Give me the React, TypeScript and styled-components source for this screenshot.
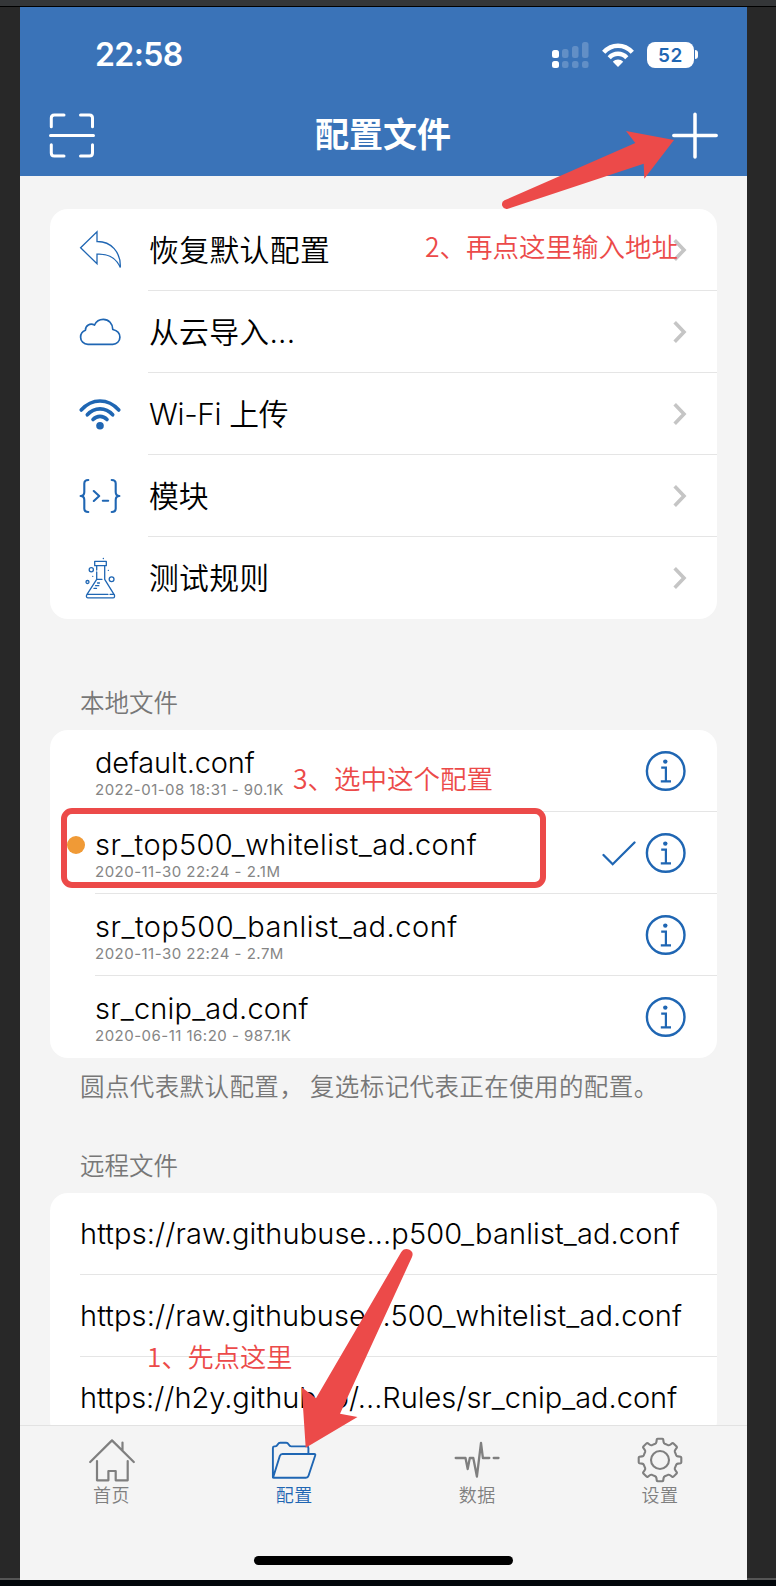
import React from "react";
import styled, { createGlobalStyle } from "styled-components";

const latin = `Inter, "Noto Sans CJK SC", sans-serif`;
const cjk = `"Noto Sans CJK SC", sans-serif`;
const red = "#ec4a49";
const blue = "#1f66b3";

const GlobalStyle = createGlobalStyle`
  *, *::before, *::after { box-sizing: border-box; }
  body { margin: 0; background: #282828; font-family: ${latin}; }
  svg { display: block; flex: none; }
`;

const Desk = styled.div`
  position: relative;
  width: 776px;
  height: 1586px;
  overflow: hidden;
  display: flex;
  flex-direction: column;
  background: #282828;
`;
const WindowEdge = styled.div`
  flex: none;
  height: 7px;
  background: #343638;
  border-bottom: 1px solid #000;
`;
const Stage = styled.div`
  flex: none;
  height: 1573px;
  padding: 0 29px 0 20px;
  background: linear-gradient(#282828 1571px, #555 1571px);
`;
const Dock = styled.div`
  flex: 1;
  background: #02060b;
`;
const Phone = styled.main`
  height: 100%;
  display: flex;
  flex-direction: column;
  background: #f4f4f4;
`;

const Header = styled.header`
  flex: none;
  height: 169px;
  background: #3a73b8;
  color: #fff;
`;
const StatusBar = styled.div`
  height: 84px;
  padding: 10px 49px 0 75px;
  display: flex;
  align-items: center;
  justify-content: space-between;
`;
const Clock = styled.time`
  padding-top: 2px;
  font-size: 32px;
  line-height: 40px;
  font-weight: 600;
  letter-spacing: -0.6px;
`;
const Signals = styled.div`
  display: flex;
  align-items: center;
  gap: 13px;
  margin-top: 1px;
`;
const Battery = styled.div`
  display: flex;
  align-items: center;
  gap: 1px;
`;
const BatteryBody = styled.span`
  width: 47px;
  height: 26px;
  border-radius: 8px;
  background: #fff;
  color: ${blue};
  font-size: 19px;
  line-height: 27px;
  font-weight: 600;
  letter-spacing: 0.5px;
  text-align: center;
`;
const BatteryNub = styled.span`
  width: 3px;
  height: 9px;
  border-radius: 0 4px 4px 0;
  background: #fff;
`;
const NavBar = styled.div`
  height: 85px;
  padding: 2px 29px 0 28px;
  display: flex;
  align-items: center;
  justify-content: space-between;
`;
const Title = styled.h1`
  margin: 0;
  font: 600 34px/48px ${cjk};
  padding-bottom: 4px;
`;

const Content = styled.div`
  flex: none;
  height: 1249px;
  overflow: hidden;
  padding: 33px 30px 0;
`;
const Card = styled.section`
  border-radius: 18px;
  background: #fff;
`;
const Row = styled.div<{ $inset: number }>`
  position: relative;
  height: 82px;
  display: flex;
  align-items: center;
  padding: 0 30px 0 ${(p) => p.$inset}px;
  &:not(:last-child)::after {
    content: "";
    position: absolute;
    left: ${(p) => p.$inset}px;
    right: 0;
    bottom: 0;
    height: 1px;
    background: #e5e5e5;
  }
`;
const MenuRow = styled(Row)`
  padding-left: 28px;
  gap: 27px;
`;
const MenuLabel = styled.span<{ $spacing: number }>`
  flex: 1;
  font: 350 29.8px/44px ${latin};
  color: #000;
  letter-spacing: ${(p) => p.$spacing}px;
`;
const SectionLabel = styled.h2<{ $height: number }>`
  margin: 0;
  height: ${(p) => p.$height}px;
  padding: 0 30px 10px;
  display: flex;
  align-items: flex-end;
  font: 350 24.5px/36px ${cjk};
  color: #777;
`;
const Note = styled.p`
  margin: 0;
  padding: 10px 0 0 30px;
  height: 47px;
  font: 350 24.5px/36px ${cjk};
  letter-spacing: 0.4px;
  color: #777;
  white-space: pre;
`;
const FileText = styled.div`
  flex: 1;
  padding-top: 5px;
`;
const FileName = styled.div<{ $spacing: number }>`
  font-size: 29px;
  font-weight: 360;
  line-height: 32px;
  letter-spacing: ${(p) => p.$spacing}px;
  color: #000;
`;
const FileMeta = styled.div`
  font-size: 15px;
  line-height: 21px;
  letter-spacing: 0.48px;
  color: #858585;
`;
const Url = styled.span<{ $spacing: number }>`
  font-size: 29px;
  font-weight: 360;
  line-height: 40px;
  letter-spacing: ${(p) => p.$spacing}px;
  white-space: nowrap;
  color: #000;
`;
const CheckSlot = styled.span`
  margin-right: 9px;
`;
const DefaultDot = styled.span`
  position: absolute;
  left: 17px;
  top: 24px;
  width: 18px;
  height: 18px;
  border-radius: 50%;
  background: #f09a36;
`;

const TabBar = styled.nav`
  flex: 1;
  border-top: 1px solid #e2e2e2;
  padding: 11px 27px 15px 31.5px;
  display: flex;
  flex-direction: column;
  justify-content: space-between;
`;
const Tabs = styled.div`
  display: flex;
  justify-content: space-between;
`;
const Tab = styled.div<{ $active?: boolean }>`
  width: 120px;
  display: flex;
  flex-direction: column;
  align-items: center;
  color: ${(p) => (p.$active ? blue : "#7f7f7f")};
`;
const TabLabel = styled.span`
  font: 350 18px/24px ${cjk};
  letter-spacing: 0.5px;
  margin-top: -1px;
`;
const HomeIndicator = styled.div`
  width: 259px;
  height: 9px;
  margin-left: 202.5px;
  border-radius: 5px;
  background: #000;
`;

const Arrows = styled.svg`
  position: absolute;
  left: 0;
  top: 0;
  pointer-events: none;
`;
const Callout = styled.span<{ $x: number; $y: number; $size?: number }>`
  position: absolute;
  left: ${(p) => p.$x}px;
  top: ${(p) => p.$y}px;
  font: 350 ${(p) => p.$size ?? 26.5}px/36px ${cjk};
  color: ${red};
  white-space: nowrap;
`;
const Highlight = styled.div`
  position: absolute;
  left: 61px;
  top: 808px;
  width: 485px;
  height: 80px;
  border: 6px solid ${red};
  border-radius: 11px;
`;

type LineIconProps = { size: number; width?: number; children: React.ReactNode };
const LineIcon = ({ size, width = 1.4, children }: LineIconProps) => (
  <svg width={size} height={size} viewBox={`0 0 ${size} ${size}`} fill="none" stroke="currentColor" strokeWidth={width} strokeLinecap="round" strokeLinejoin="round">
    {children}
  </svg>
);
const MenuIcon = styled.span`
  color: ${blue};
`;

const RestoreIcon = () => (
  <LineIcon size={44} width={1.3}>
    <path strokeLinejoin="miter" d="M2.6 19.7 19 3.8V13.5C33 13.3 43 24 42.3 39.5C38.5 30.5 30 25.6 19 26.2V35.8Z" />
  </LineIcon>
);
const CloudIcon = () => (
  <LineIcon size={44} width={1.7}>
    <path d="M10 34.3C5.6 34.3 2.6 31 2.6 27.2C2.6 23.8 4.5 21.4 7.4 20.3C7.5 15.5 12 12.7 16.5 15C18.2 11.4 21.4 9.4 25.3 9.4C30.8 9.4 34.7 13.7 34.8 19.5C39 20.4 41.9 23.5 41.9 27.3C41.9 31.2 38.7 34.3 34.8 34.3Z" />
  </LineIcon>
);
const WifiIcon = () => (
  <LineIcon size={44} width={3.6}>
    <path d="M3.2 18C14 6 30 6 40.8 18M9.3 22.8C16.5 14.9 27.5 14.9 34.7 22.8M15 27.5C19 23.3 25 23.3 29 27.5" />
    <circle cx="22" cy="33.7" r="3.8" fill="currentColor" stroke="none" />
  </LineIcon>
);
const ModuleIcon = () => (
  <LineIcon size={44} width={2.1}>
    <path d="M10.3 6C7 6 6.3 7.5 6.3 9.5V18C6.3 20.5 5 22 2.6 22C5 22 6.3 23.5 6.3 26V34.5C6.3 36.5 7 38 10.3 38M33.7 6C37 6 37.7 7.5 37.7 9.5V18C37.7 20.5 39 22 41.4 22C39 22 37.7 23.5 37.7 26V34.5C37.7 36.5 37 38 33.7 38M15.8 17 21.2 22 15.8 27M24.8 26.7H30.2" />
  </LineIcon>
);
const FlaskIcon = () => (
  <LineIcon size={44} width={1.3}>
    <path d="M16.7 5.3H28.3V9.7H16.7ZM18.7 9.7V14M18.7 16V23.3L9 38.3M26.7 9.7V23.3L36 38.3M18.7 23.3H24M9 38.3H30M32 38.3H36.2C37 40.5 36.5 41.9 35 41.9H9.8C8.2 41.9 8 40 9 38.3M19.5 27H21.5M17.6 29.7H20.8M16 32.4H18.5" />
    <circle cx="13.3" cy="13.7" r="2.1" />
    <circle cx="33.6" cy="23.3" r="2.4" />
    <circle cx="9.5" cy="26" r="1.5" />
    <path d="M30.3 14.3h.1M14.7 20.3h.1M25.3 2.5h.1" />
  </LineIcon>
);
const Chevron = () => (
  <svg width="16" height="26" viewBox="0 0 16 26" fill="none" stroke="#c5c5c5" strokeWidth="3.6">
    <path d="M3.7 3.3 13 13 3.7 22.7" />
  </svg>
);
const InfoIcon = () => (
  <svg width="42" height="42" viewBox="0 0 42 42" fill="none" stroke={blue} strokeWidth="2.4">
    <circle cx="20.7" cy="21" r="18.8" />
    <circle cx="20.3" cy="11.6" r="2.2" fill={blue} stroke="none" />
    <path strokeWidth="2.2" d="M16.2 17.6H20.9V31M15.8 31.3H26" />
  </svg>
);
const CheckIcon = () => (
  <svg width="34" height="26" viewBox="0 0 34 26" fill="none" stroke={blue} strokeWidth="2.3" strokeLinecap="round">
    <path d="M1.5 15 10.7 24.2 32.5 2.5" />
  </svg>
);

const gearPath = (() => {
  const points: string[] = [];
  for (let i = 0; i < 8; i++) {
    const a = (i * Math.PI) / 4;
    const at = (x: number, y: number) =>
      `${(23 + x * Math.cos(a) - y * Math.sin(a)).toFixed(2)} ${(23 + x * Math.sin(a) + y * Math.cos(a)).toFixed(2)}`;
    points.push(
      `${i ? "L" : "M"}${at(-4.8, -16.2)}Q${at(-3.8, -16.7)} ${at(-3.6, -18)}L${at(-3.2, -20.6)}Q${at(-3, -21.3)} ${at(-2.2, -21.3)}` +
      `L${at(2.2, -21.3)}Q${at(3, -21.3)} ${at(3.2, -20.6)}L${at(3.6, -18)}Q${at(3.8, -16.7)} ${at(4.8, -16.2)}`
    );
  }
  return points.join("") + "Z";
})();

const HomeIcon = () => (
  <LineIcon size={46} width={2.2}>
    <path d="M1.2 25 23 3.4 44.8 25M33.5 5.5V13.5M8 24V43.3H19.4V34H26.7V43.3H38.7V24" />
  </LineIcon>
);
const FolderIcon = () => (
  <LineIcon size={46} width={1.9}>
    <path d="M1.9 40.5V10.9Q1.9 9.4 3.4 9.4H4.2C7.2 9.4 6.2 5.7 9.2 5.7H15.2C18.2 5.7 17.2 9.4 20.2 9.4H35.9Q37.4 9.4 37.4 10.9V16.7M2.1 40.5 8.8 19Q9.5 17 11.5 17H43.2Q44.7 17 44.2 18.5L37.5 38.7Q36.9 40.7 34.9 40.7H2.7Q1.9 40.7 2.1 40.5" />
  </LineIcon>
);
const PulseIcon = () => (
  <LineIcon size={46} width={2.3}>
    <path d="M1.7 21H11.5L13.7 32L15.8 21H19.3L22.9 39.5 27 6 28.9 21H35.3M39.7 21H44.5" />
  </LineIcon>
);
const GearIcon = () => (
  <LineIcon size={46} width={2.1}>
    <path d={gearPath} />
    <circle cx="23" cy="23" r="9" />
  </LineIcon>
);

const menu = [
  { label: "恢复默认配置", Icon: RestoreIcon, spacing: 0.4 },
  { label: "从云导入...", Icon: CloudIcon, spacing: 0.3 },
  { label: "Wi-Fi 上传", Icon: WifiIcon, spacing: -0.3 },
  { label: "模块", Icon: ModuleIcon, spacing: 0 },
  { label: "测试规则", Icon: FlaskIcon, spacing: 0.3 },
];
const files = [
  { name: "default.conf", meta: "2022-01-08 18:31 - 90.1K", spacing: -0.16 },
  { name: "sr_top500_whitelist_ad.conf", meta: "2020-11-30 22:24 - 2.1M", spacing: 0.41, selected: true },
  { name: "sr_top500_banlist_ad.conf", meta: "2020-11-30 22:24 - 2.7M", spacing: 0.51 },
  { name: "sr_cnip_ad.conf", meta: "2020-06-11 16:20 - 987.1K", spacing: 0.18 },
];
const urls = [
  { text: "https://raw.githubuse...p500_banlist_ad.conf", spacing: 0.12 },
  { text: "https://raw.githubuse...500_whitelist_ad.conf", spacing: 0.1 },
  { text: "https://h2y.github.io/...Rules/sr_cnip_ad.conf", spacing: -0.01 },
];
const tabs = [
  { label: "首页", Icon: HomeIcon },
  { label: "配置", Icon: FolderIcon, active: true },
  { label: "数据", Icon: PulseIcon },
  { label: "设置", Icon: GearIcon },
];

export default function App() {
  return (
    <Desk>
      <GlobalStyle />
      <WindowEdge />
      <Stage>
        <Phone>
          <Header>
            <StatusBar>
              <Clock>22:58</Clock>
              <Signals>
                <svg width="37" height="26" viewBox="0 0 37 26" fill="#fff">
                  <rect x="0" y="8" width="7" height="8" rx="2.5" />
                  <rect x="0" y="19" width="7" height="7" rx="2.5" />
                  <g opacity="0.2">
                    <rect x="10" y="7" width="6.5" height="9" rx="2.5" />
                    <rect x="10" y="19" width="6.5" height="7" rx="2.5" />
                    <rect x="20" y="4" width="6.5" height="12" rx="2.5" />
                    <rect x="20" y="19" width="6.5" height="7" rx="2.5" />
                    <rect x="30" y="0" width="6.5" height="16" rx="2.5" />
                    <rect x="30" y="19" width="6.5" height="7" rx="2.5" />
                  </g>
                </svg>
                <svg width="32" height="24" viewBox="0 0 32 24" fill="none" stroke="#fff" strokeWidth="4.4">
                  <path d="M1.7 9.3C9.8 .5 22.2 .5 30.3 9.3M7.2 14.7C12.2 9.4 19.8 9.4 24.8 14.7" />
                  <path d="M16 24 10.8 18.7C13.8 15.8 18.2 15.8 21.2 18.7Z" fill="#fff" stroke="none" />
                </svg>
                <Battery>
                  <BatteryBody>52</BatteryBody>
                  <BatteryNub />
                </Battery>
              </Signals>
            </StatusBar>
            <NavBar>
              <LineIcon size={48} width={3}>
                <path d="M3.3 15.700V7Q3.300 4 6.300 4H16M32.500 4H41.500Q44.500 4 44.500 7V15.700M44.500 33.700V42Q44.500 45 41.500 45H32.500M16 45H6.300Q3.300 45 3.300 42V33.700M2.500 24.500H45.500" />
              </LineIcon>
              <Title>配置文件</Title>
              <LineIcon size={48} width={3.5}>
                <path d="M25 3.3V46M3.8 24.6H46.2" />
              </LineIcon>
            </NavBar>
          </Header>

          <Content>
            <Card>
              {menu.map(({ label, Icon, spacing }) => (
                <MenuRow key={label} $inset={98}>
                  <MenuIcon><Icon /></MenuIcon>
                  <MenuLabel $spacing={spacing}>{label}</MenuLabel>
                  <Chevron />
                </MenuRow>
              ))}
            </Card>

            <SectionLabel $height={111}>本地文件</SectionLabel>
            <Card>
              {files.map((f) => (
                <Row key={f.name} $inset={45}>
                  {f.selected && <DefaultDot />}
                  <FileText>
                    <FileName $spacing={f.spacing}>{f.name}</FileName>
                    <FileMeta>{f.meta}</FileMeta>
                  </FileText>
                  {f.selected && <CheckSlot><CheckIcon /></CheckSlot>}
                  <InfoIcon />
                </Row>
              ))}
            </Card>
            <Note>圆点代表默认配置， 复选标记代表正在使用的配置。</Note>

            <SectionLabel $height={88}>远程文件</SectionLabel>
            <Card>
              {urls.map((u) => (
                <Row key={u.text} $inset={30}>
                  <Url $spacing={u.spacing}>{u.text}</Url>
                </Row>
              ))}
            </Card>
          </Content>

          <TabBar>
            <Tabs>
              {tabs.map(({ label, Icon, active }) => (
                <Tab key={label} $active={active}>
                  <Icon />
                  <TabLabel>{label}</TabLabel>
                </Tab>
              ))}
            </Tabs>
            <HomeIndicator />
          </TabBar>
        </Phone>
      </Stage>
      <Dock />

      <Highlight />
      <Callout $x={425} $y={228}>2、再点这里输入地址</Callout>
      <Callout $x={293} $y={760}>3、选中这个配置</Callout>
      <Callout $x={147} $y={1338} $size={26.2}>1、先点这里</Callout>
      <Arrows width="776" height="1586" viewBox="0 0 776 1586" fill={red}>
        <path d="M504.5 200.3 635.3 143 626 131 674 140 644.3 178.7 643.7 163.7 508 208.7Q504 209.8 502.3 206Q501 202 504.5 200.3Z" />
        <path d="M401 1252.5 316 1398.3 301.7 1387.3 305.7 1447.7 357.5 1417 340 1413.7 412 1257Q414 1252 409.5 1249.7Q404 1247.5 401 1252.5Z" />
      </Arrows>
    </Desk>
  );
}
